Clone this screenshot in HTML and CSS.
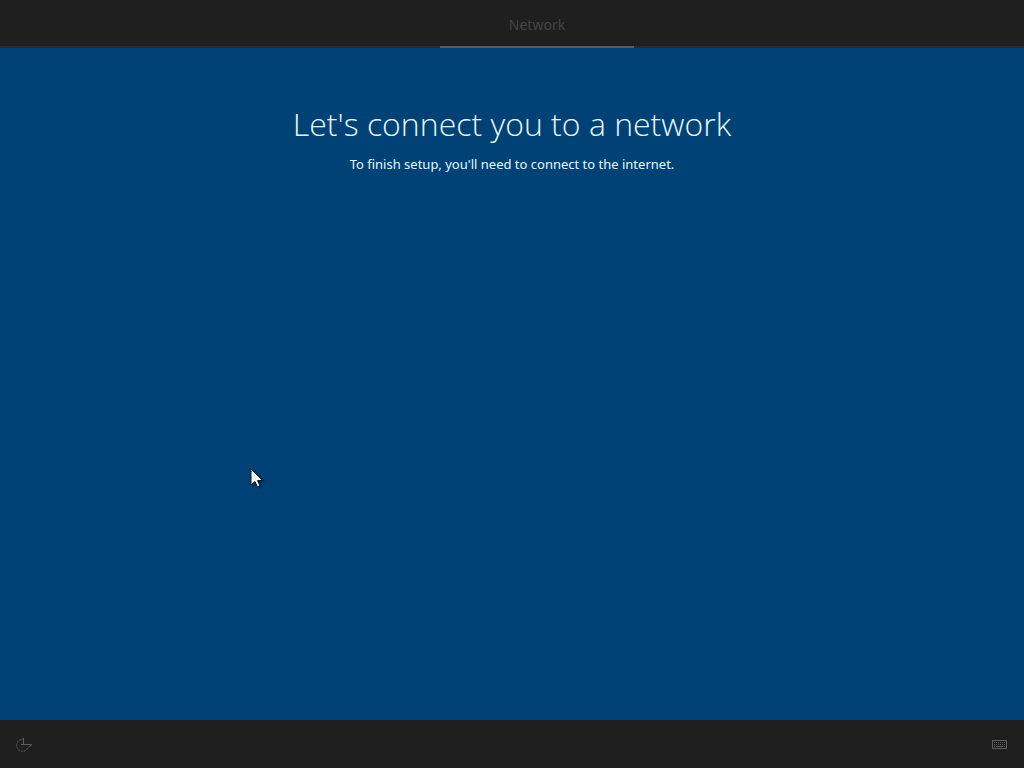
FILE: index.html
```
<!DOCTYPE html>
<html lang="en">
<head>
    <meta charset="UTF-8">
    <meta name="viewport" content="width=device-width, initial-scale=1.0">
    <title>Network setup</title>
    <link rel="stylesheet" href="styles.css">
</head>
<body>

    <!-- Setup steps -->
    <nav class="steps">
        <a class="step" href="#network" aria-current="step">Network</a>
    </nav>

    <!-- Main Content -->
    <main class="content" id="network">
        <h1>Let's connect you to a network</h1>
        <p>To finish setup, you'll need to connect to the internet.</p>

        <svg class="cursor" width="14" height="21" viewBox="0 0 14 21" aria-hidden="true">
            <path d="M1 1v16l4-3.500 2.500 5.500 2.500-1-2.500-5.500h5z" fill="#fff" stroke="#06182b" stroke-width="1"/>
        </svg>
    </main>

    <!-- Bottom bar -->
    <footer class="bottom-bar">
        <button class="icon-button" type="button" aria-label="Ease of access">
            <svg width="18" height="16" viewBox="0 0 18 16" fill="none" stroke="currentColor">
                <path d="M5 2.500A6 6 0 1 0 12.500 9.500" stroke-dasharray="2 1"/>
                <path d="M7.500 1v7M5.500 3l2-2M5 7.500H16M13.500 9.500l2.500-2"/>
            </svg>
        </button>
        <button class="icon-button" type="button" aria-label="Keyboard">
            <svg width="16" height="10" viewBox="0 0 16 10" fill="none" stroke="currentColor">
                <rect x="0.500" y="0.500" width="14" height="8"/>
                <path d="M2 2.500h12M2 4.500h12" stroke-dasharray="1 1"/>
                <path d="M2 6.500h1M4 6.500h7M12 6.500h1"/>
            </svg>
        </button>
    </footer>

</body>
</html>
```
FILE: styles.css
```
/* General body style */
body {
    font-family: 'Noto Sans', 'Open Sans', sans-serif;
    margin: 0;
    min-height: 100vh;
    display: flex;
    flex-direction: column;
    background-color: #004275;
    color: #fff;
}

/* Setup steps */
.steps {
    display: flex;
    justify-content: center;
    height: 46px;
    padding-left: 50px;
    background-color: #1f1f1f;
    border-bottom: 2px solid #292b2d;
}

.step {
    width: 194px;
    height: 46px;
    line-height: 50px;
    border-bottom: 2px solid #5a5a5a;
    color: #444;
    font-size: 14px;
    text-align: center;
    text-decoration: none;
}

/* Main content */
.content {
    position: relative;
    flex: 1;
    padding-top: 52px;
    text-align: center;
}

h1 {
    margin: 0;
    color: #e4f8ff;
    font-family: 'Open Sans', 'Noto Sans', sans-serif;
    font-size: 32px;
    font-weight: 300;
    line-height: 48px;
}

p {
    margin: 6px 0 0;
    color: #e4f8ff;
    font-size: 13px;
    line-height: 20px;
}

/* Mouse pointer, over the page */
.cursor {
    position: absolute;
    left: 250px;
    top: 420px;
    filter: drop-shadow(2px 1px 1px rgba(0, 0, 0, 0.4));
}

/* Bottom bar */
.bottom-bar {
    display: flex;
    justify-content: space-between;
    align-items: center;
    height: 48px;
    padding: 0 16px;
    background-color: #1f1f1f;
}

.icon-button {
    display: flex;
    padding: 2px 0 0;
    border: none;
    background: none;
    color: #5c5c5c;
    cursor: pointer;
}
```
